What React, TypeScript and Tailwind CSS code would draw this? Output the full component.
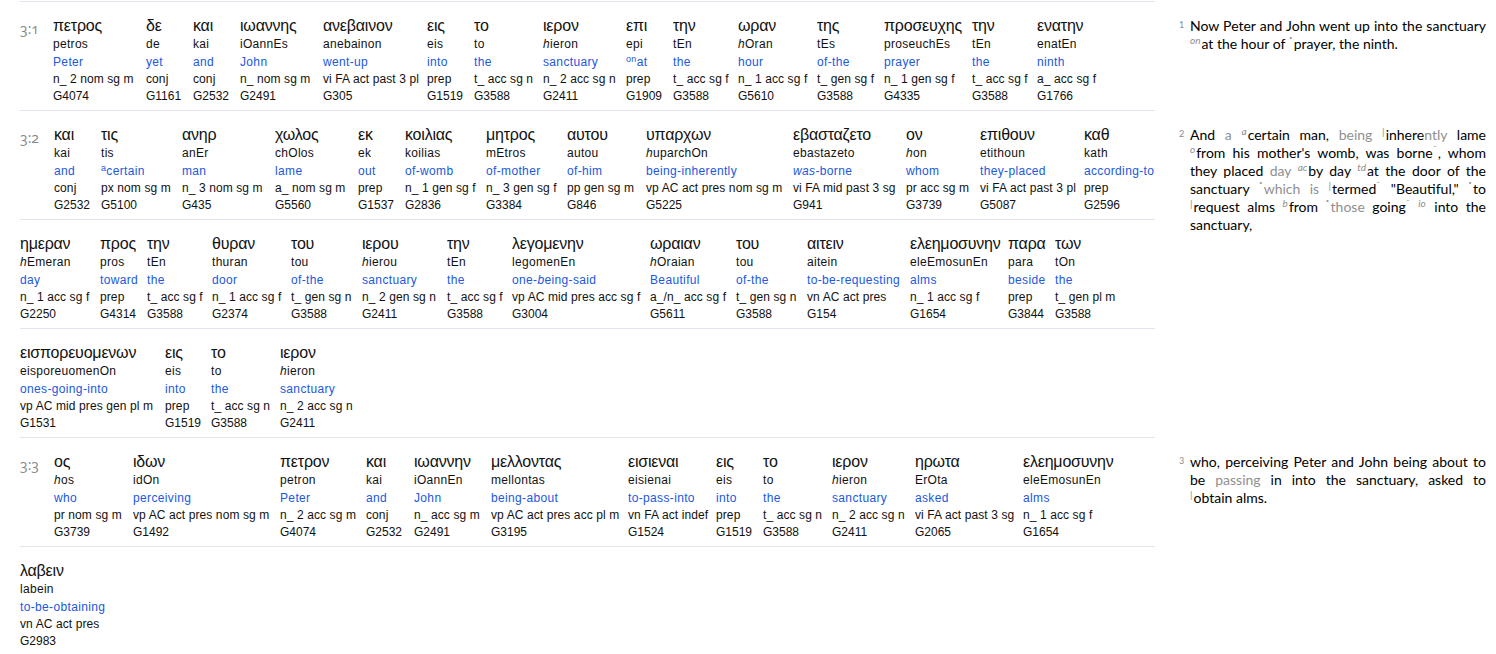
import React from "react";

const H = ({ children }: { children: React.ReactNode }) => <i>{children}</i>;

type W = { w: string; g: string; t: React.ReactNode; e: React.ReactNode; p: string; s: string };

const word = (w: string, g: string, t: React.ReactNode, e: React.ReactNode, p: string, s: string): W => ({ w, g, t, e, p, s });

const row1: W[] = [
  word("w-[93px]", "πετρος", "petros", "Peter", "n_ 2 nom sg m", "G4074"),
  word("w-[47px]", "δε", "de", "yet", "conj", "G1161"),
  word("w-[47px]", "και", "kai", "and", "conj", "G2532"),
  word("w-[83px]", "ιωαννης", "iOannEs", "John", "n_ nom sg m", "G2491"),
  word("w-[104px]", "ανεβαινον", "anebainon", "went-up", "vi FA act past 3 pl", "G305"),
  word("w-[47px]", "εις", "eis", "into", "prep", "G1519"),
  word("w-[69px]", "το", "to", "the", "t_ acc sg n", "G3588"),
  word("w-[83px]", "ιερον", <><H>h</H>ieron</>, "sanctuary", "n_ 2 acc sg n", "G2411"),
  word("w-[47px]", "επι", "epi", <><sup className="text-[9px]">on</sup>at</>, "prep", "G1909"),
  word("w-[65px]", "την", "tEn", "the", "t_ acc sg f", "G3588"),
  word("w-[79px]", "ωραν", <><H>h</H>Oran</>, "hour", "n_ 1 acc sg f", "G5610"),
  word("w-[67px]", "της", "tEs", "of-the", "t_ gen sg f", "G3588"),
  word("w-[88px]", "προσευχης", "proseuchEs", "prayer", "n_ 1 gen sg f", "G4335"),
  word("w-[65px]", "την", "tEn", "the", "t_ acc sg f", "G3588"),
  word("w-[90px]", "ενατην", "enatEn", "ninth", "a_ acc sg f", "G1766"),
];

const row2: W[] = [
  word("w-[47px]", "και", "kai", "and", "conj", "G2532"),
  word("w-[81px]", "τις", "tis", <><sup className="text-[9px]">a</sup>certain</>, "px nom sg m", "G5100"),
  word("w-[93px]", "ανηρ", "anEr", "man", "n_ 3 nom sg m", "G435"),
  word("w-[83px]", "χωλος", "chOlos", "lame", "a_ nom sg m", "G5560"),
  word("w-[47px]", "εκ", "ek", "out", "prep", "G1537"),
  word("w-[81px]", "κοιλιας", "koilias", "of-womb", "n_ 1 gen sg f", "G2836"),
  word("w-[81px]", "μητρος", "mEtros", "of-mother", "n_ 3 gen sg f", "G3384"),
  word("w-[79px]", "αυτου", "autou", "of-him", "pp gen sg m", "G846"),
  word("w-[147px]", "υπαρχων", <><H>h</H>uparchOn</>, "being-inherently", "vp AC act pres nom sg m", "G5225"),
  word("w-[113px]", "εβασταζετο", "ebastazeto", <><H>was</H>-borne</>, "vi FA mid past 3 sg", "G941"),
  word("w-[74px]", "ον", <><H>h</H>on</>, "whom", "pr acc sg m", "G3739"),
  word("w-[104px]", "επιθουν", "etithoun", "they-placed", "vi FA act past 3 pl", "G5087"),
  word("w-[71px]", "καθ", "kath", "according-to", "prep", "G2596"),
];

const row3: W[] = [
  word("w-[80px]", "ημεραν", <><H>h</H>Emeran</>, "day", "n_ 1 acc sg f", "G2250"),
  word("w-[47px]", "προς", "pros", "toward", "prep", "G4314"),
  word("w-[65px]", "την", "tEn", "the", "t_ acc sg f", "G3588"),
  word("w-[79px]", "θυραν", "thuran", "door", "n_ 1 acc sg f", "G2374"),
  word("w-[71px]", "του", "tou", "of-the", "t_ gen sg n", "G3588"),
  word("w-[85px]", "ιερου", <><H>h</H>ierou</>, "sanctuary", "n_ 2 gen sg n", "G2411"),
  word("w-[65px]", "την", "tEn", "the", "t_ acc sg f", "G3588"),
  word("w-[138px]", "λεγομενην", "legomenEn", <>one-<H>b</H>eing-said</>, "vp AC mid pres acc sg f", "G3004"),
  word("w-[86px]", "ωραιαν", <><H>h</H>Oraian</>, "Beautiful", "a_/n_ acc sg f", "G5611"),
  word("w-[71px]", "του", "tou", "of-the", "t_ gen sg n", "G3588"),
  word("w-[103px]", "αιτειν", "aitein", "to-be-requesting", "vn AC act pres", "G154"),
  word("w-[98px]", "ελεημοσυνην", "eleEmosunEn", "alms", "n_ 1 acc sg f", "G1654"),
  word("w-[47px]", "παρα", "para", "beside", "prep", "G3844"),
  word("w-[80px]", "των", "tOn", "the", "t_ gen pl m", "G3588"),
];

const row4: W[] = [
  word("w-[145px]", "εισπορευομενων", "eisporeuomenOn", "ones-going-into", "vp AC mid pres gen pl m", "G1531"),
  word("w-[46px]", "εις", "eis", "into", "prep", "G1519"),
  word("w-[69px]", "το", "to", "the", "t_ acc sg n", "G3588"),
  word("w-[80px]", "ιερον", <><H>h</H>ieron</>, "sanctuary", "n_ 2 acc sg n", "G2411"),
];

const row5: W[] = [
  word("w-[79px]", "ος", <><H>h</H>os</>, "who", "pr nom sg m", "G3739"),
  word("w-[147px]", "ιδων", "idOn", "perceiving", "vp AC act pres nom sg m", "G1492"),
  word("w-[86px]", "πετρον", "petron", "Peter", "n_ 2 acc sg m", "G4074"),
  word("w-[48px]", "και", "kai", "and", "conj", "G2532"),
  word("w-[77px]", "ιωαννην", "iOannEn", "John", "n_ acc sg m", "G2491"),
  word("w-[137px]", "μελλοντας", "mellontas", "being-about", "vp AC act pres acc pl m", "G3195"),
  word("w-[88px]", "εισιεναι", "eisienai", "to-pass-into", "vn FA act indef", "G1524"),
  word("w-[47px]", "εις", "eis", "into", "prep", "G1519"),
  word("w-[69px]", "το", "to", "the", "t_ acc sg n", "G3588"),
  word("w-[83px]", "ιερον", <><H>h</H>ieron</>, "sanctuary", "n_ 2 acc sg n", "G2411"),
  word("w-[108px]", "ηρωτα", "ErOta", "asked", "vi FA act past 3 sg", "G2065"),
  word("w-[90px]", "ελεημοσυνην", "eleEmosunEn", "alms", "n_ 1 acc sg f", "G1654"),
];

const row6: W[] = [word("w-[100px]", "λαβειν", "labein", "to-be-obtaining", "vn AC act pres", "G2983")];

function Word({ w }: { w: W }) {
  return (
    <div className={`${w.w} shrink-0 whitespace-nowrap text-[12px] text-[#111]`}>
      <div className="h-[18px] text-[16px] leading-[18px] tracking-[-0.2px]">{w.g}</div>
      <div className="h-[18px] leading-[18px] tracking-[0.3px]">{w.t}</div>
      <div className="h-[18px] leading-[18px] tracking-[0.35px] text-[#2058e0]">{w.e}</div>
      <div className="h-[17px] leading-[17px] tracking-[0.1px]">{w.p}</div>
      <div className="h-[17px] leading-[17px]">{w.s}</div>
    </div>
  );
}

function Row({ words, label, labelWidth, last }: { words: W[]; label?: string; labelWidth?: string; last?: boolean }) {
  return (
    <div className={`flex pt-[15px] ${last ? "h-[108px]" : "h-[109px] border-b border-[#e2e4f0]"}`}>
      {label && (
        <div className={`${labelWidth} shrink-0 pt-[3px] text-[14px] leading-[18px] text-[#888] [font-family:'Open_Sans',sans-serif] oldstyle-nums`}>
          {label}
        </div>
      )}
      {words.map((w, i) => (
        <Word key={i} w={w} />
      ))}
    </div>
  );
}

const M = ({ children, italic }: { children: React.ReactNode; italic?: boolean }) => (
  <sup className={`pr-[1px] text-[10px] text-[#8c8c8c] ${italic ? "italic" : ""}`}>{children}</sup>
);
const D = () => <sup className="pr-[1px] text-[10px] text-[#444]">˚</sup>;
const G = ({ children }: { children: React.ReactNode }) => <span className="text-[#8f8f8f]">{children}</span>;

function VerseText({ n, children, spaced }: { n: string; children: React.ReactNode; spaced?: boolean }) {
  return (
    <div className="flex pl-[24px] pr-[10px]">
      <div className="w-[11px] shrink-0 pt-[1px] text-[9px] leading-[14px] text-[#8c8c8c]">{n}</div>
      <p className={`flex-1 text-justify text-[14px] leading-[18px] text-black ${spaced ? "[word-spacing:1px]" : ""}`}>{children}</p>
    </div>
  );
}

export default function App() {
  return (
    <div className="h-[654px] w-[1496px] overflow-hidden bg-white pt-px [font-family:'Liberation_Sans',Arial,sans-serif]">
      <div className="flex">
        <div className="w-[1155px] shrink-0 pl-[20px]">
          <div className="border-t border-[#e2e4f0]" />
          <Row words={row1} label="3:1" labelWidth="w-[33px]" />
        </div>
        <div className="flex-1 pt-[16px] [font-family:'Lato',sans-serif]">
          <VerseText n="1">
            Now Peter and John went up into the sanctuary <M italic>on</M>at the hour of <D />prayer, the ninth.
          </VerseText>
        </div>
      </div>
      <div className="flex">
        <div className="w-[1155px] shrink-0 pl-[20px]">
          <Row words={row2} label="3:2" labelWidth="w-[34px]" />
          <Row words={row3} />
          <Row words={row4} />
        </div>
        <div className="flex-1 pt-[15px] [font-family:'Lato',sans-serif]">
          <VerseText n="2" spaced>
            And <G>a</G> <M italic>a</M>certain man, <G>being</G> <M>|</M>inhere<G>ntly</G> lame <M italic>o</M>from his mother's womb, was borne<M>˜</M>, whom they placed <G>day</G> <M italic>ac</M>by day <M italic>td</M>at the door of the sanctuary <D /><G>which is</G> <M>|</M>termed<M>˜</M> "Beautiful," <D />to <M>|</M>request alms <M italic>b</M>from <D /><G>those</G> going<M>˜</M> <M italic>io</M> into the sanctuary,
          </VerseText>
        </div>
      </div>
      <div className="flex">
        <div className="w-[1155px] shrink-0 pl-[20px]">
          <Row words={row5} label="3:3" labelWidth="w-[34px]" />
          <Row words={row6} last />
        </div>
        <div className="flex-1 pt-[15px] [font-family:'Lato',sans-serif]">
          <VerseText n="3">
            who, perceiving Peter and John being about to be <G>passing</G> in into the sanctuary, asked to <M>|</M>obtain alms.
          </VerseText>
        </div>
      </div>
    </div>
  );
}
